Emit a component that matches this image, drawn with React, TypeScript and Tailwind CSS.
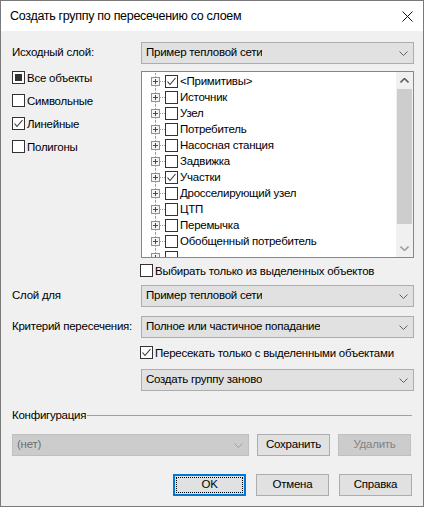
import React from "react";

const font = { fontFamily: '"Liberation Sans", Arial, sans-serif' };

function Chevron({ color = "#606060" }: { color?: string }) {
  return (
    <svg width="9" height="5" viewBox="0 0 9 5" className="shrink-0">
      <polyline points="0.5,0.5 4.5,4.5 8.5,0.5" fill="none" stroke={color} strokeWidth="1" />
    </svg>
  );
}

function Select({ value, disabled }: { value: string; disabled?: boolean }) {
  return (
    <div
      className={
        disabled
          ? "flex h-[22px] items-center justify-between border border-[#bfbfbf] bg-[#cccccc] pl-[4px] pr-[5px] text-[#6d6d6d]"
          : "flex h-[22px] items-center justify-between border border-[#adadad] bg-[#e1e1e1] pl-[4px] pr-[5px] text-black"
      }
    >
      <span className="truncate">{value}</span>
      <Chevron color={disabled ? "#a0a0a0" : "#606060"} />
    </div>
  );
}

function Check({ state }: { state: "on" | "off" | "mixed" }) {
  return (
    <div className="flex h-[13px] w-[13px] shrink-0 items-center justify-center border border-[#333333] bg-white">
      {state === "mixed" && <div className="h-[7px] w-[7px] bg-[#333333]" />}
      {state === "on" && (
        <svg width="11" height="11" viewBox="0 0 11 11">
          <polyline points="1.5,5.5 4,8.5 9.5,2" fill="none" stroke="#333333" strokeWidth="1.1" />
        </svg>
      )}
    </div>
  );
}

function CheckRow({ label, state }: { label: string; state: "on" | "off" | "mixed" }) {
  return (
    <div className="flex h-[13px] items-center gap-[2px] leading-[16px]">
      <Check state={state} />
      <span className="whitespace-nowrap">{label}</span>
    </div>
  );
}

function Button({ label, disabled, focused }: { label: string; disabled?: boolean; focused?: boolean }) {
  if (focused) {
    return (
      <div className="flex h-[22px] w-[73px] items-center justify-center border-2 border-[#0078d7] bg-[#e1e1e1] p-[1px]">
        <div className="flex h-full w-full items-center justify-center border border-dotted border-black">
          {label}
        </div>
      </div>
    );
  }
  return (
    <div
      className={
        disabled
          ? "flex h-[22px] w-[73px] items-center justify-center border border-[#bfbfbf] bg-[#cccccc] text-[#838383]"
          : "flex h-[22px] w-[73px] items-center justify-center border border-[#adadad] bg-[#e1e1e1]"
      }
    >
      {label}
    </div>
  );
}

const treeItems: { label: string; checked?: boolean }[] = [
  { label: "<Примитивы>", checked: true },
  { label: "Источник" },
  { label: "Узел" },
  { label: "Потребитель" },
  { label: "Насосная станция" },
  { label: "Задвижка" },
  { label: "Участки", checked: true },
  { label: "Дросселирующий узел" },
  { label: "ЦТП" },
  { label: "Перемычка" },
  { label: "Обобщенный потребитель" },
  { label: "" },
];

function TreeRow({ label, checked }: { label: string; checked?: boolean }) {
  return (
    <div className="flex h-[16px] shrink-0 items-center">
      <div className="w-[9px] shrink-0" />
      <div className="flex h-full w-[9px] shrink-0 flex-col items-center">
        <div className="w-0 flex-1 border-l border-dotted border-[#a0a0a0]" />
        <div className="flex h-[9px] w-[9px] items-center justify-center border border-[#919191] bg-[#f4f4f4]">
          <svg width="5" height="5" viewBox="0 0 5 5">
            <path d="M0 2.5H5M2.5 0V5" stroke="#3a4a70" strokeWidth="1" />
          </svg>
        </div>
        <div className="w-0 flex-1 border-l border-dotted border-[#a0a0a0]" />
      </div>
      <div className="h-0 w-[5px] shrink-0 border-t border-dotted border-[#a0a0a0]" />
      <Check state={checked ? "on" : "off"} />
      <span className="ml-[2px] whitespace-nowrap leading-[16px]">{label}</span>
    </div>
  );
}

function Tree() {
  return (
    <div className="flex h-[187px] border border-[#828790] bg-white">
      <div className="flex flex-1 flex-col overflow-hidden pt-[1px]">
        {treeItems.map((it, i) => (
          <TreeRow key={i} label={it.label} checked={it.checked} />
        ))}
      </div>
      <div className="flex w-[17px] shrink-0 flex-col bg-[#f0f0f0]">
        <div className="flex h-[17px] items-center justify-center">
          <svg width="9" height="5" viewBox="0 0 9 5">
            <polyline points="0.5,4.5 4.5,0.5 8.5,4.5" fill="none" stroke="#606060" strokeWidth="1.6" />
          </svg>
        </div>
        <div className="mx-[1px] h-[135px] bg-[#cdcdcd]" />
        <div className="flex-1" />
        <div className="flex h-[17px] items-center justify-center">
          <svg width="9" height="5" viewBox="0 0 9 5">
            <polyline points="0.5,0.5 4.5,4.5 8.5,0.5" fill="none" stroke="#a0a0a0" strokeWidth="1.6" />
          </svg>
        </div>
      </div>
    </div>
  );
}

export default function App() {
  return (
    <div
      className="flex h-[507px] w-[424px] flex-col border border-[#7a7a7a] bg-[#f0f0f0] text-[11.5px] tracking-[-0.25px] text-black"
      style={font}
    >
      <div className="flex h-[30px] shrink-0 items-center justify-between bg-white pl-[9px] pr-[10px]">
        <span className="text-[12.5px] tracking-[-0.3px]">Создать группу по пересечению со слоем</span>
        <svg width="11" height="11" viewBox="0 0 11 11">
          <path d="M0.5 0.5L10.5 10.5M10.5 0.5L0.5 10.5" stroke="#111" strokeWidth="1" />
        </svg>
      </div>

      <div className="flex flex-col pl-[11px] pr-[9px]">
        <div className="mt-[11px] flex items-center">
          <span className="w-[129px] shrink-0">Исходный слой:</span>
          <div className="flex-1">
            <Select value="Пример тепловой сети" />
          </div>
        </div>

        <div className="mt-[7px] flex">
          <div className="flex w-[129px] shrink-0 flex-col gap-[10px]">
            <CheckRow label="Все объекты" state="mixed" />
            <CheckRow label="Символьные" state="off" />
            <CheckRow label="Линейные" state="on" />
            <CheckRow label="Полигоны" state="off" />
          </div>
          <div className="flex-1">
            <Tree />
          </div>
        </div>

        <div className="ml-[128px] mt-[6px]">
          <CheckRow label="Выбирать только из выделенных объектов" state="off" />
        </div>

        <div className="mt-[8px] flex items-center">
          <span className="w-[129px] shrink-0">Слой для</span>
          <div className="flex-1">
            <Select value="Пример тепловой сети" />
          </div>
        </div>

        <div className="mt-[9px] flex items-center">
          <span className="w-[129px] shrink-0 whitespace-nowrap">Критерий пересечения:</span>
          <div className="flex-1">
            <Select value="Полное или частичное попадание" />
          </div>
        </div>

        <div className="ml-[128px] mt-[8px]">
          <CheckRow label="Пересекать только с выделенными объектами" state="on" />
        </div>

        <div className="ml-[129px] mt-[10px]">
          <Select value="Создать группу заново" />
        </div>

        <div className="mt-[16px] flex h-[16px] items-center">
          <span className="leading-[16px]">Конфигурация</span>
          <div className="ml-[1px] mr-[2px] h-px flex-1 bg-[#a0a0a0]" />
        </div>

        <div className="mt-[11px] flex items-center">
          <div className="w-[237px]">
            <Select value="(нет)" disabled />
          </div>
          <div className="ml-[8px]">
            <Button label="Сохранить" />
          </div>
          <div className="ml-[8px]">
            <Button label="Удалить" disabled />
          </div>
        </div>

        <div className="mt-[18px] flex justify-end gap-[10px] pr-[2px]">
          <Button label="OK" focused />
          <Button label="Отмена" />
          <Button label="Справка" />
        </div>
      </div>
    </div>
  );
}
